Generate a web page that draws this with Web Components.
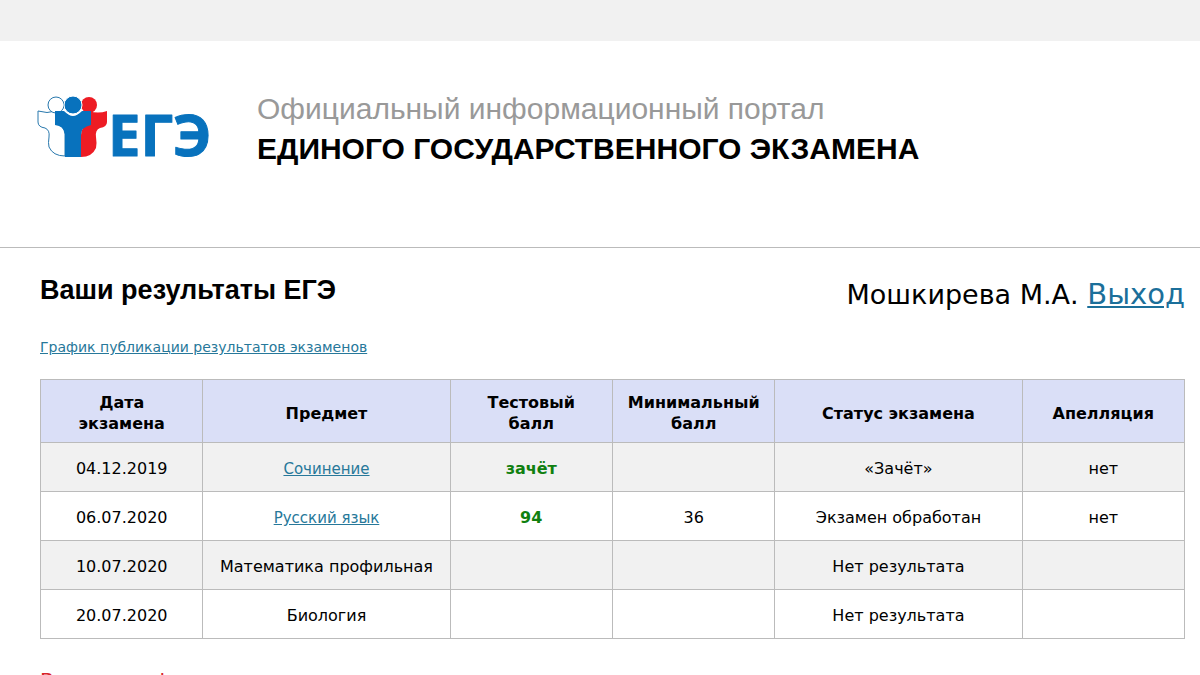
<!DOCTYPE html>
<html lang="ru">
<head>
<meta charset="utf-8">
<meta name="viewport" content="width=device-width, initial-scale=1">
<title>Результаты ЕГЭ</title>
<style>
    body {
        margin: 0;
        background: #ffffff;
        color: #000000;
        font-family: Verdana, "DejaVu Sans", sans-serif;
        font-size: 16px;
    }
</style>
</head>
<body>
<ege-header>
    <ege-logo slot="logo"></ege-logo>
    <span slot="subtitle">Официальный информационный портал</span>
    <span slot="title">ЕДИНОГО ГОСУДАРСТВЕННОГО ЭКЗАМЕНА</span>
</ege-header>
<results-page>
    <span slot="title">Ваши результаты ЕГЭ</span>
    <user-bar slot="user">Мошкирева М.А.</user-bar>
    <results-table></results-table>
    <span slot="notice">Важная информация</span>
</results-page>

<script>
// Логотип: три фигуры и надпись
class EgeLogo extends HTMLElement {
    constructor() {
        super();
        this.attachShadow({ mode: 'open' });
    }

    connectedCallback() {
        this.shadowRoot.innerHTML = `
            <style>
                :host { display: block; }
                svg { display: block; width: 172px; height: 64px; overflow: visible; }
                text { font: 700 58px "Open Sans", sans-serif; }
            </style>
            <svg viewBox="0 0 172 64" role="img" aria-label="ЕГЭ">
                <g stroke="#2878ad" stroke-width="1">
                    <path d="M1 15 Q10 18 19 15 L20 28 Q27 30 28 38 V60 Q16 60 12 51 Q11 47 12 41 Q13 34 8 32 Q1 31 1 26 Z" fill="#fff"/>
                    <circle cx="19" cy="9" r="8" fill="#fff"/>
                </g>
                <path d="M70 15 Q61 18 52 15 L51 28 Q44 31 44 39 V61 Q55 61 59 52 Q60 47 59 41 Q58 34 63 32 Q70 31 70 26 Z" fill="#ed1c24"/>
                <circle cx="52" cy="9" r="8" fill="#ed1c24"/>
                <path d="M18 15 H27 Q32 20 36 20 Q40 20 45 15 H54 V29 Q44 31 44 39 V61 H28 V38 Q27 30 18 29 Z" fill="#0872bd"/>
                <circle cx="36" cy="9" r="9" fill="#0872bd" stroke="#fff" stroke-width="1"/>
                <text x="71" y="60" fill="#0872bd" stroke="#0872bd" stroke-width="1" stroke-linejoin="round">ЕГЭ</text>
            </svg>
        `;
    }
}

// Шапка портала
class EgeHeader extends HTMLElement {
    constructor() {
        super();
        this.attachShadow({ mode: 'open' });
    }

    connectedCallback() {
        this.shadowRoot.innerHTML = `
            <style>
                :host {
                    display: block;
                    border-top: 41px solid #f1f1f1;
                    border-bottom: 1px solid #bbbbbb;
                }

                header {
                    display: flex;
                    align-items: flex-start;
                    gap: 48px;
                    padding: 48px 16px 78px 37px;
                }

                .logo { padding-top: 7px; }

                .text {
                    font-family: Helvetica, "Liberation Sans", sans-serif;
                    font-size: 30px;
                    line-height: 40px;
                }

                .subtitle { color: #999999; }

                h1 {
                    margin: 0;
                    font-size: 30px;
                    font-weight: 700;
                }
            </style>

            <header>
                <div class="logo"><slot name="logo"></slot></div>
                <div class="text">
                    <div class="subtitle"><slot name="subtitle"></slot></div>
                    <h1><slot name="title"></slot></h1>
                </div>
            </header>
        `;
    }
}

// Имя участника и ссылка выхода
class UserBar extends HTMLElement {
    constructor() {
        super();
        this.attachShadow({ mode: 'open' });
    }

    connectedCallback() {
        this.shadowRoot.innerHTML = `
            <style>
                :host {
                    display: block;
                    font-size: 27px;
                    line-height: 36px;
                    white-space: nowrap;
                }

                a { color: #1b6f9a; font-size: 29px; }
            </style>
            <slot></slot> <a href="#">Выход</a>
        `;
    }
}

class ResultsTable extends HTMLElement {
    constructor() {
        super();
        this.attachShadow({ mode: 'open' });
        this.rows = [
            { date: '04.12.2019', subject: 'Сочинение', link: true, score: 'зачёт', min: '', status: '«Зачёт»', appeal: 'нет' },
            { date: '06.07.2020', subject: 'Русский язык', link: true, score: '94', min: '36', status: 'Экзамен обработан', appeal: 'нет' },
            { date: '10.07.2020', subject: 'Математика профильная', score: '', min: '', status: 'Нет результата', appeal: '' },
            { date: '20.07.2020', subject: 'Биология', score: '', min: '', status: 'Нет результата', appeal: '' }
        ];
    }

    connectedCallback() {
        this.render();
    }

    renderRow(row) {
        const subject = row.link ? `<a href="#">${row.subject}</a>` : row.subject;
        return `
            <tr>
                <td>${row.date}</td>
                <td>${subject}</td>
                <td class="score">${row.score}</td>
                <td>${row.min}</td>
                <td>${row.status}</td>
                <td>${row.appeal}</td>
            </tr>
        `;
    }

    render() {
        this.shadowRoot.innerHTML = `
            <style>
                :host { display: block; }

                table {
                    width: 100%;
                    table-layout: fixed;
                    border-collapse: collapse;
                    font-size: 16px;
                    line-height: 21px;
                    text-align: center;
                }

                col { width: 14.2%; }
                .wide { width: 21.6%; }

                th, td {
                    border: 1px solid #bbbbbb;
                    padding: 15px 8px 12px;
                }

                th {
                    padding: 12px 14px 8px;
                    background: #dadff7;
                    font-weight: 700;
                }

                tbody tr:nth-child(odd) { background: #f1f1f1; }
                a { color: #27789a; font-size: 15px; line-height: 16px; }
                .score { color: #108010; font-weight: 700; }
            </style>

            <table>
                <colgroup>
                    <col><col class="wide"><col><col><col class="wide"><col>
                </colgroup>
                <thead>
                    <tr>
                        <th>Дата экзамена</th>
                        <th>Предмет</th>
                        <th>Тестовый балл</th>
                        <th>Минимальный балл</th>
                        <th>Статус экзамена</th>
                        <th>Апелляция</th>
                    </tr>
                </thead>
                <tbody>${this.rows.map(row => this.renderRow(row)).join('')}</tbody>
            </table>
        `;
    }
}

// Основная часть страницы
class ResultsPage extends HTMLElement {
    constructor() {
        super();
        this.attachShadow({ mode: 'open' });
    }

    connectedCallback() {
        this.shadowRoot.innerHTML = `
            <style>
                :host {
                    display: block;
                    padding: 24px 15px 24px 40px;
                }

                .top {
                    display: flex;
                    justify-content: space-between;
                    align-items: flex-start;
                }

                h2 {
                    margin: 0;
                    font-family: Helvetica, "Liberation Sans", sans-serif;
                    font-size: 27px;
                    line-height: 36px;
                }

                .user { padding-top: 4px; }

                .schedule {
                    margin: 24px 0 22px;
                    font-size: 14px;
                    line-height: 20px;
                }

                .schedule a { color: #27789a; }

                .notice {
                    margin: 28px 0 0;
                    color: #d8232a;
                    font-size: 20px;
                    line-height: 26px;
                }
            </style>

            <main>
                <div class="top">
                    <h2><slot name="title"></slot></h2>
                    <div class="user"><slot name="user"></slot></div>
                </div>
                <p class="schedule"><a href="#">График публикации результатов экзаменов</a></p>
                <slot></slot>
                <p class="notice"><slot name="notice"></slot></p>
            </main>
        `;
    }
}

customElements.define('ege-logo', EgeLogo);
customElements.define('ege-header', EgeHeader);
customElements.define('user-bar', UserBar);
customElements.define('results-table', ResultsTable);
customElements.define('results-page', ResultsPage);
</script>
</body>
</html>
